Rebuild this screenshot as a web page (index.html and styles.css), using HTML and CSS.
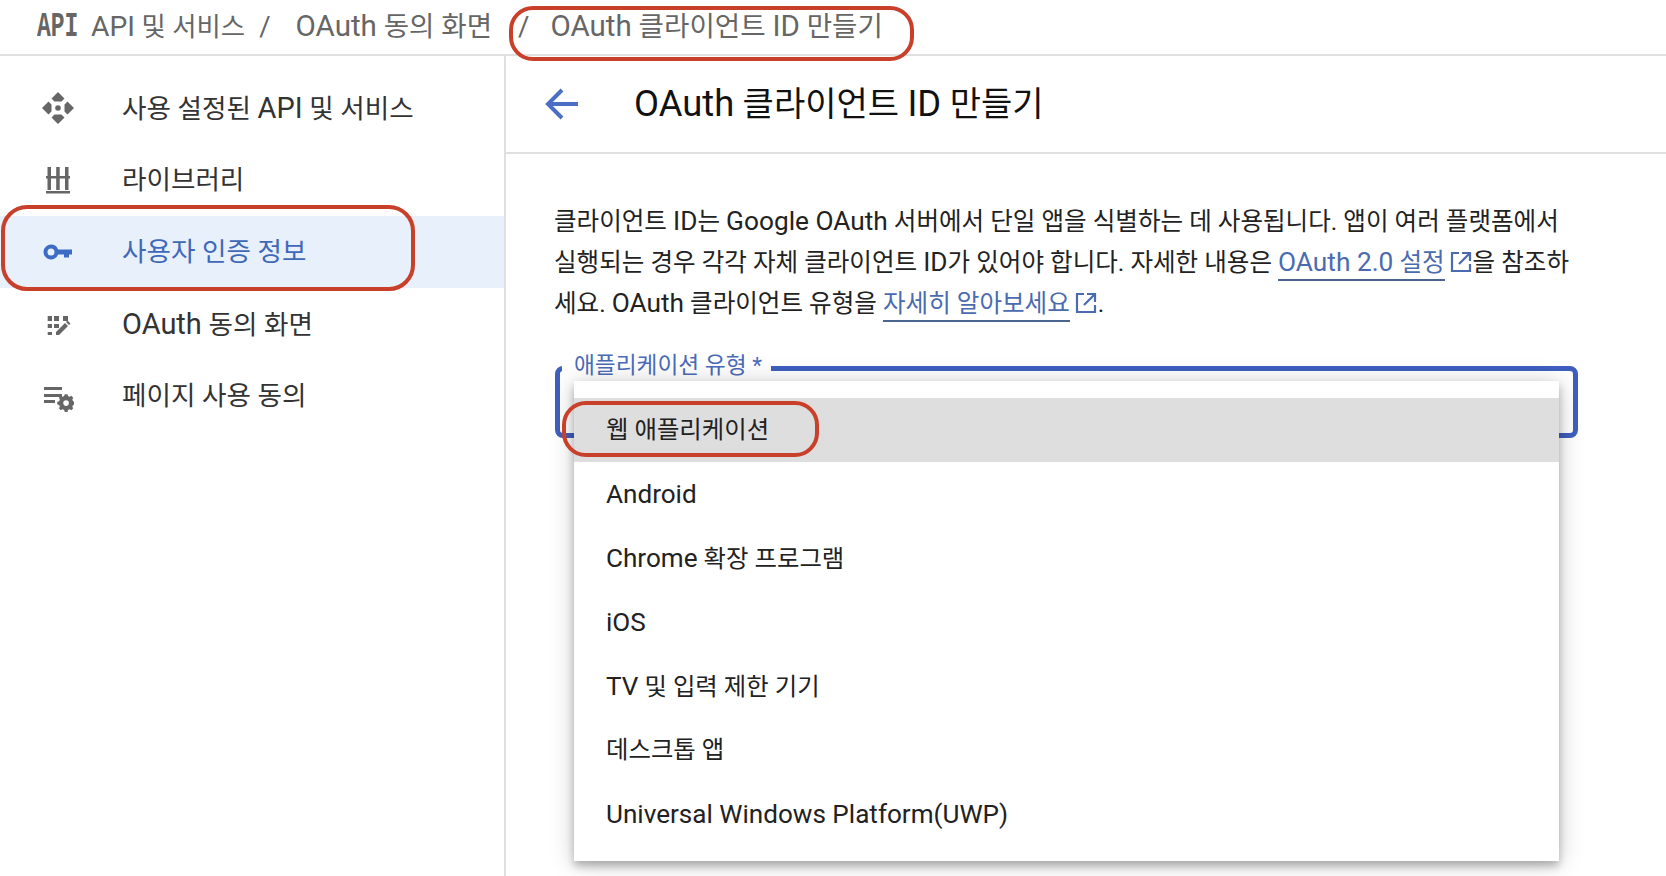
FILE: index.html
```html
<!DOCTYPE html>
<html lang="ko">
<head>
<meta charset="utf-8">
<title>OAuth 클라이언트 ID 만들기</title>
<link rel="stylesheet" href="styles.css">
</head>
<body>
<div class="app">
  <header class="topbar">
    <span class="api-mark">API</span>
    <span class="crumb crumb-first"><span class="la">API</span> 및 서비스</span>
    <span class="sep">/</span>
    <span class="crumb"><span class="la">OAuth</span> 동의 화면</span>
    <span class="sep sep-last">/</span>
    <span class="crumb"><span class="la">OAuth</span> 클라이언트 <span class="la">ID</span> 만들기</span>
  </header>
  <div class="main">
    <aside class="nav">
      <a class="nav-item">
        <svg class="nav-icon" viewBox="0 0 32 32"><path d="M16 0l6.500 6.500-3 3h-7l-3-3zM0 16l6.500-6.500 3 3v7l-3 3zM32 16l-6.500-6.500-3 3v7l3 3zM16 32l-6.500-6.500 3-3h7l3 3z"/><circle cx="16" cy="16" r="2.800"/></svg>
        <span class="nav-text"><span>사용 설정된 </span><span class="la">API</span> 및 서비스</span>
      </a>
      <a class="nav-item">
        <svg class="nav-icon" viewBox="0 0 32 32"><path d="M5.500 3H9v9H5.500zM14.200 3h3.500v9h-3.500zM23 3h3.500v9H23zM4 12h24v2.600H4zM5.500 14.600H9V26H5.500zM14.200 14.600h3.500V26h-3.500zM23 14.600h3.500V26H23zM4 27h24v2.600H4z"/></svg>
        <span class="nav-text">라이브러리</span>
      </a>
      <a class="nav-item nav-active">
        <svg class="nav-icon" viewBox="0 0 32 32"><path fill-rule="evenodd" d="M9 8.500a7.500 7.500 0 0 1 7.100 5H30v5h-3v3h-5v-3h-5.900A7.500 7.500 0 1 1 9 8.500zm0 4a3.500 3.500 0 1 0 0 7 3.500 3.500 0 0 0 0-7z"/></svg>
        <span class="nav-text">사용자 인증 정보</span>
      </a>
      <a class="nav-item">
        <svg class="nav-icon" viewBox="0 0 32 32"><path d="M5.700 8h4.300v5H5.700zM12 8h5v5h-5zM21 8h5v5h-5zM5.700 16h4.300v4H5.700zM12 16h5v4h-5zM5.700 24h4.300v3H5.700z"/><path d="M14 27v-3l9-9 3 3-9 9zM24 14l1.500-1.500 3 3L27 17z"/></svg>
        <span class="nav-text"><span class="la">OAuth</span> 동의 화면</span>
      </a>
      <a class="nav-item">
        <svg class="nav-icon" viewBox="0 0 32 32"><path d="M2 7h18v3H2zM2 14h18v3H2zM2 20h11v3H2z"/><path fill-rule="evenodd" d="M22 14h3l.5 2 1.800.8 1.800-1 2 2-1 1.800.8 1.900 2 .5v3l-2 .5-.8 1.800 1 1.800-2 2-1.800-1-1.800.8-.5 2h-3l-.5-2-1.800-.8-1.800 1-2-2 1-1.800-.8-1.800-2-.5v-3l2-.5.8-1.900-1-1.800 2-2 1.800 1 1.800-.8zm1.500 6.500a3 3 0 1 0 0 6 3 3 0 0 0 0-6z" transform="translate(2 1) scale(.94)"/></svg>
        <span class="nav-text">페이지 사용 동의</span>
      </a>
    </aside>
    <section class="content">
      <header class="page-head">
        <svg class="back" viewBox="0 0 34 32"><path d="M33 16H4M17 2L3 16l14 14" fill="none" stroke="currentColor" stroke-width="4"/></svg>
        <h1><span class="la">OAuth</span> 클라이언트 <span class="la">ID</span> 만들기</h1>
      </header>
      <div class="page-body">
        <p class="intro">클라이언트 <span class="la">ID</span>는 <span class="la">Google OAuth</span> 서버에서 단일 앱을 식별하는 데 사용됩니다. 앱이 여러 플랫폼에서<br>실행되는 경우 각각 자체 클라이언트 <span class="la">ID</span>가 있어야 합니다. 자세한 내용은 <a class="link"><span class="la">OAuth 2.0</span> 설정</a><svg class="ext" viewBox="0 0 24 24"><path d="M10 3H3v18h18v-7M13 3h8v8M21 3L10 14" fill="none" stroke="currentColor" stroke-width="2.200"/></svg>을 참조하<br>세요. <span class="la">OAuth</span> 클라이언트 유형을 <a class="link">자세히 알아보세요</a><svg class="ext" viewBox="0 0 24 24"><path d="M10 3H3v18h18v-7M13 3h8v8M21 3L10 14" fill="none" stroke="currentColor" stroke-width="2.200"/></svg>.</p>
        <div class="field">
          <label class="field-label">애플리케이션 유형 *</label>
          <ul class="menu">
            <li class="option option-selected">웹 애플리케이션</li>
            <li class="option"><span class="la">Android</span></li>
            <li class="option"><span><span class="la">Chrome</span> 확장 프로그램</span></li>
            <li class="option"><span class="la">iOS</span></li>
            <li class="option"><span><span class="la">TV</span> 및 입력 제한 기기</span></li>
            <li class="option">데스크톱 앱</li>
            <li class="option"><span class="la">Universal Windows Platform(UWP)</span></li>
          </ul>
        </div>
      </div>
    </section>
  </div>
  <div class="mark mark-crumb"></div>
  <div class="mark mark-nav"></div>
  <div class="mark mark-option"></div>
</div>
</body>
</html>
```
FILE: styles.css
```css
* { box-sizing: border-box; }
html, body { margin: 0; padding: 0; background: #fff; }
body { font-family: Roboto, "Noto Sans CJK KR", sans-serif; color: #222; }
.app { position: relative; width: 1666px; height: 876px; overflow: hidden; }
.la { font-size: 1.07em; }

.topbar {
  display: flex; align-items: center; height: 56px; padding: 0 0 1px 37px;
  border-bottom: 2px solid #e0e0e0; font-size: 27.600px; line-height: 36px; color: #666;
}
.api-mark {
  display: inline-block; width: 41px; font-family: "Liberation Mono", monospace; font-weight: 700;
  font-size: 23px; line-height: 24px; color: #666; transform: scaleY(1.55);
}
.crumb-first { margin-left: 13px; font-size: 26.400px; }
.sep { margin: 0 25px 0 14px; }
.sep-last { margin: 0 21px 0 26px; }

.main { display: flex; height: 820px; }
.nav { flex: none; width: 506px; padding-top: 16px; border-right: 2px solid #e0e0e0; }
.nav-item {
  display: flex; align-items: center; height: 72px; padding-left: 42px;
  font-size: 26.600px; line-height: 36px; color: #333;
}
.nav-item .la { font-size: 1.09em; }
.nav-text { margin-left: 48px; }
.nav-icon { flex: none; width: 32px; height: 32px; fill: #666; }
.nav-active { background: #e8f0fc; color: #3f68b8; }
.nav-active .nav-icon { fill: #3d6cc4; }

.content { flex: 1; }
.page-head {
  display: flex; align-items: center; height: 98px; padding-left: 39px;
  border-bottom: 2px solid #e0e0e0;
}
.back { flex: none; width: 34px; height: 32px; color: #4a6fc4; }
h1 { margin: 0 0 0 55px; font-size: 34px; line-height: 44px; font-weight: 400; color: #111; }
.page-body { padding: 47px 0 0 48px; }
.intro { margin: 0; font-size: 24.550px; line-height: 40px; color: #222; white-space: nowrap; }
.link { color: #4a6bb0; border-bottom: 2px solid #4a6590; padding-bottom: 2px; }
.ext { width: 24px; height: 24px; margin-left: 4px; vertical-align: -3px; color: #4a6bb0; }

.field {
  position: relative; width: 1023px; height: 72px; margin: 42px 0 0 1px;
  border: 5px solid #3f5fbf; border-radius: 8px;
}
.field-label {
  position: absolute; left: 2px; top: -21px; padding: 0 9px 0 12px; background: #fff;
  font-size: 22.700px; line-height: 32px; color: #4a6bb8; white-space: nowrap;
}
.menu {
  position: absolute; left: 14px; top: 10px; width: 985px; height: 480px; margin: 0; padding: 17px 0 0;
  list-style: none; background: #fff; box-shadow: 0 5px 8px rgba(0,0,0,.25), 0 2px 24px rgba(0,0,0,.2);
}
.option {
  display: flex; align-items: center; height: 64px; padding-left: 32px;
  font-size: 24.400px; line-height: 32px; color: #222;
}
.option-selected { background: #dedede; }

.mark { position: absolute; border: 4px solid #c9402a; }
.mark-crumb { left: 509px; top: 6px; width: 405px; height: 55px; border-radius: 24px; }
.mark-nav { left: 1px; top: 205px; width: 414px; height: 86px; border-radius: 26px; }
.mark-option { left: 562px; top: 401px; width: 257px; height: 56px; border-radius: 24px; }
```
